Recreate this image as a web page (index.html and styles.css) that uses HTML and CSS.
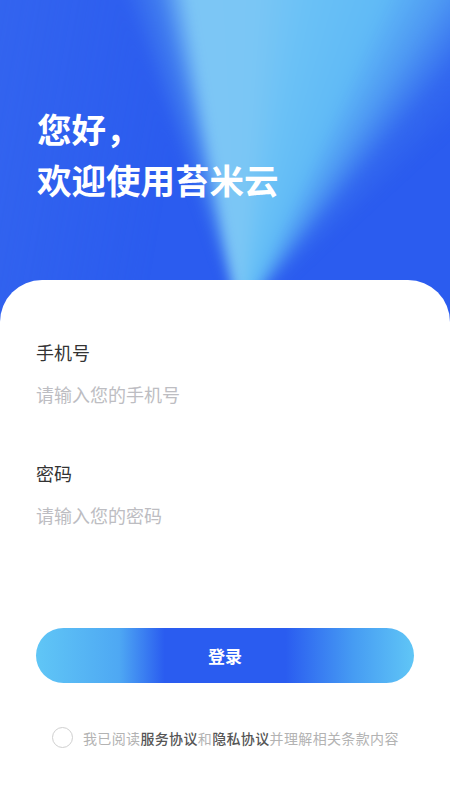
FILE: index.html
```html
<!DOCTYPE html>
<html lang="zh-CN">
<head>
<meta charset="utf-8">
<title>登录</title>
<link rel="stylesheet" href="styles.css">
</head>
<body>
<div class="page">
  <header class="hero">
    <h1 class="hero-title">您好，<br>欢迎使用苔米云</h1>
  </header>
  <main class="card">
    <div class="field">
      <label class="field-label" for="phone">手机号</label>
      <input class="field-input" id="phone" type="text" placeholder="请输入您的手机号">
    </div>
    <div class="field field-second">
      <label class="field-label" for="pwd">密码</label>
      <input class="field-input" id="pwd" type="password" placeholder="请输入您的密码">
    </div>
    <button class="login-btn" type="button">登录</button>
    <div class="agree">
      <span class="agree-check"></span>
      <p class="agree-text">我已阅读<b>服务协议</b>和<b>隐私协议</b>并理解相关条款内容</p>
    </div>
  </main>
</div>
</body>
</html>
```
FILE: styles.css
```css
* { box-sizing: border-box; }
html, body { margin: 0; padding: 0; }
body {
  font-family: "Noto Sans CJK SC", "Noto Sans", sans-serif;
  background: #ffffff;
}
.page {
  position: relative;
  width: 450px;
  height: 800px;
  overflow: hidden;
  background: #2b5cef;
  display: flex;
  flex-direction: column;
}
.page::before {
  content: "";
  position: absolute;
  left: -30px;
  top: -30px;
  width: 510px;
  height: 400px;
  background:
    conic-gradient(from -20deg at 270px 350px,
      rgba(44, 93, 240, 0) 0deg,
      rgba(90, 165, 240, 0.45) 6deg,
      rgba(125, 198, 245, 1) 11deg,
      rgba(122, 198, 245, 1) 23deg,
      rgba(106, 193, 246, 1) 32deg,
      rgba(96, 186, 246, 1) 44deg,
      rgba(82, 160, 243, 0.9) 52deg,
      rgba(60, 120, 240, 0.45) 60deg,
      rgba(44, 93, 240, 0) 68deg,
      rgba(44, 93, 240, 0) 360deg),
    linear-gradient(100deg, rgba(70, 120, 240, 0.35) 0%, rgba(44, 93, 240, 0) 40%);
  filter: blur(6px);
}
.hero {
  position: relative;
  height: 280px;
  padding: 103px 37px 0;
}
.hero-title {
  margin: 0;
  color: #ffffff;
  font-size: 34.5px;
  line-height: 51px;
  font-weight: 700;
}
.card {
  position: relative;
  flex: 1;
  background: #ffffff;
  border-radius: 42px 42px 0 0;
  padding: 59px 36px 0;
  display: flex;
  flex-direction: column;
}
.field {
  display: flex;
  flex-direction: column;
}
.field-second { margin-top: 53px; }
.field-label {
  font-size: 18px;
  line-height: 26px;
  color: #333333;
}
.field-input {
  margin-top: 16px;
  border: none;
  outline: none;
  padding: 0;
  font-family: inherit;
  font-size: 18px;
  line-height: 26px;
  height: 26px;
  color: #333;
  background: transparent;
}
.field-input::placeholder { color: #bdbdc2; }
.login-btn {
  margin-top: 100px;
  height: 55px;
  width: 100%;
  border: none;
  border-radius: 28px;
  color: #ffffff;
  font-family: inherit;
  font-size: 17px;
  font-weight: 700;
  background: linear-gradient(90deg,
    #60c6f6 0%,
    #4ea8f3 22%,
    #2a5cf0 34%,
    #2a5cf0 66%,
    #469cf3 84%,
    #60c6f6 100%);
}
.agree {
  margin-top: 44px;
  display: flex;
  align-items: center;
  padding-left: 16px;
}
.agree-check {
  width: 21px;
  height: 21px;
  border: 1px solid #cfcfcf;
  border-radius: 50%;
  flex-shrink: 0;
}
.agree-text {
  margin: 0 0 0 10px;
  font-size: 14px;
  line-height: 20px;
  letter-spacing: 0.35px;
  color: #b3b3b3;
}
.agree-text b {
  font-weight: 500;
  color: #555555;
}
```
